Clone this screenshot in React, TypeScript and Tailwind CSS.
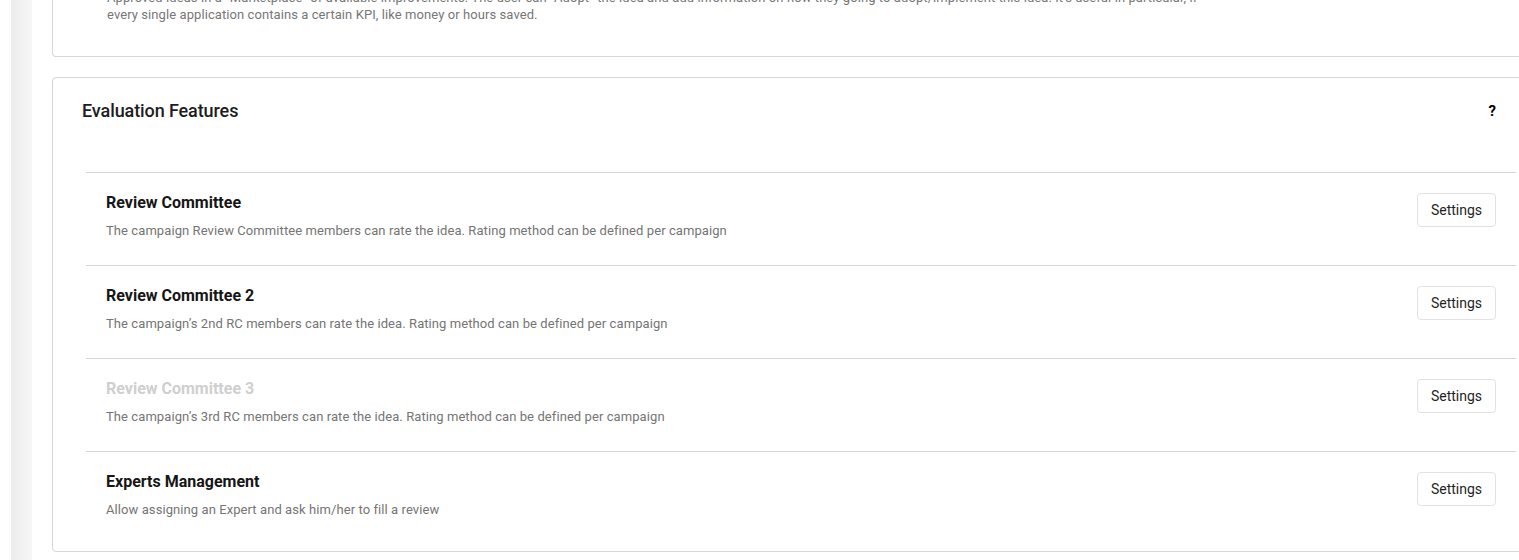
import React from "react";

const rows = [
  {
    title: "Review Committee",
    desc: "The campaign Review Committee members can rate the idea. Rating method can be defined per campaign",
    disabled: false,
  },
  {
    title: "Review Committee 2",
    desc: "The campaign’s 2nd RC members can rate the idea. Rating method can be defined per campaign",
    disabled: false,
  },
  {
    title: "Review Committee 3",
    desc: "The campaign’s 3rd RC members can rate the idea. Rating method can be defined per campaign",
    disabled: true,
  },
  {
    title: "Experts Management",
    desc: "Allow assigning an Expert and ask him/her to fill a review",
    disabled: false,
  },
];

export default function App() {
  return (
    <div
      className="w-[1519px] h-[560px] overflow-hidden bg-white flex"
      style={{ fontFamily: "Roboto, 'Noto Sans', Arial, sans-serif" }}
    >
      <div className="w-[11px] shrink-0 bg-white" />
      <div className="w-[21px] shrink-0 bg-gradient-to-r from-[#ececec] to-[#f6f6f6]" />
      <div className="flex-1 min-w-0 pl-[20px]">
        <div className="w-[1498px] flex flex-col gap-[20px]">
          {/* Top card (scrolled) */}
          <div className="border border-t-0 border-[#d6d6d6] rounded-b-[4px] h-[57px] overflow-hidden pl-[54px]">
            <p className="mt-[-11px] text-[13px] leading-[17px] tracking-[0.08px] text-[#777] w-[1100px]">
              Approved ideas in a “Marketplace” of available improvements. The user can “Adopt” the idea and add information on how they going to adopt/implement this idea. It’s useful in particular, if every single application contains a certain KPI, like money or hours saved.
            </p>
          </div>

          {/* Evaluation Features card */}
          <div className="border border-[#d6d6d6] rounded-[4px] pb-[7px]">
            <div className="flex items-center justify-between pl-[29px] pr-[53px] pt-[21px] pb-[49px]">
              <h2 className="text-[18px] leading-[24px] font-medium tracking-[-0.1px] text-[#1d1d1d]">
                Evaluation Features
              </h2>
              <span className="text-[15px] font-bold text-black leading-[20px]">?</span>
            </div>
            <div className="px-[33px]">
              {rows.map((r) => (
                <div
                  key={r.title}
                  className="flex justify-between items-start border-t border-[#d4d4d4] px-[20px] h-[93px]"
                >
                  <div className="pt-[18px]">
                    <div
                      className={`text-[16px] leading-[24px] font-bold ${
                        r.disabled ? "text-[#cfcfcf]" : "text-[#161616]"
                      }`}
                    >
                      {r.title}
                    </div>
                    <div className="mt-[6px] text-[13px] leading-[20px] tracking-[0.08px] text-[#757575]">
                      {r.desc}
                    </div>
                  </div>
                  <button className="mt-[20px] h-[34px] w-[79px] border border-[#e2e2e2] rounded-[4px] bg-white text-[14px] text-[#1f1f1f]">
                    Settings
                  </button>
                </div>
              ))}
            </div>
          </div>
        </div>
      </div>
    </div>
  );
}
